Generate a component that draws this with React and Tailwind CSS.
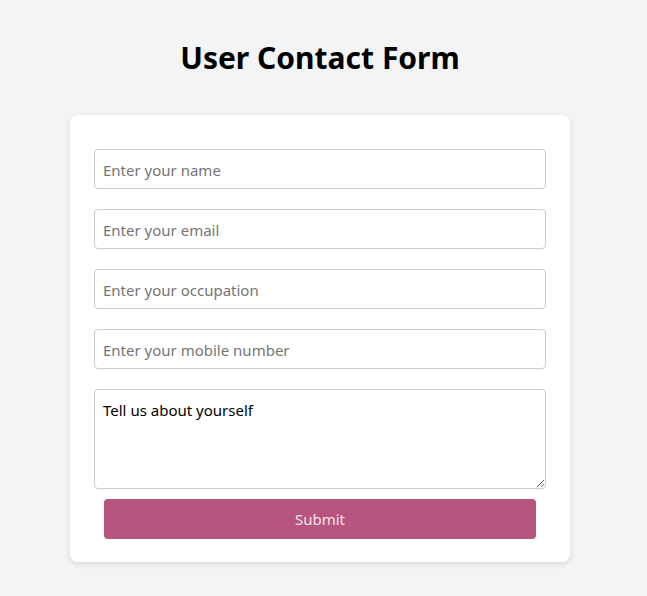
import { useState } from "react";

function App() {
  const [form, setForm] = useState({
    name: "",
    email: "",
    occupation: "",
    mobile: "",
    about: "Tell us about yourself",
  });

  const handleChange = (e) => {
    setForm({ ...form, [e.target.name]: e.target.value });
  };

  const handleSubmit = (event) => {
    event.preventDefault();
  };

  const inputClass =
    "w-full h-10 border border-[#cccccc] rounded-[4px] px-2 pt-[2px] text-[15px] text-black placeholder:text-[#757575] focus:outline-none";

  return (
    <div className="min-h-screen bg-[#f3f4f6] pr-[7px] pt-[40px] font-['Noto_Sans',sans-serif]">
      <h1 className="text-center text-3xl leading-9 font-bold text-black">
        User Contact Form
      </h1>

      <form
        onSubmit={handleSubmit}
        className="mx-auto mt-[39px] w-[500px] bg-white rounded-lg shadow-[0_2px_6px_rgb(0,0,0,0.12)] px-6 pt-[34px] pb-[23px] flex flex-col"
      >
        <input
          type="text"
          name="name"
          placeholder="Enter your name"
          value={form.name}
          onChange={handleChange}
          className={inputClass}
        />
        <input
          type="email"
          name="email"
          placeholder="Enter your email"
          value={form.email}
          onChange={handleChange}
          className={inputClass + " mt-5"}
        />
        <input
          type="text"
          name="occupation"
          placeholder="Enter your occupation"
          value={form.occupation}
          onChange={handleChange}
          className={inputClass + " mt-5"}
        />
        <input
          type="tel"
          name="mobile"
          placeholder="Enter your mobile number"
          value={form.mobile}
          onChange={handleChange}
          className={inputClass + " mt-5"}
        />
        <textarea
          name="about"
          value={form.about}
          onChange={handleChange}
          className="mt-5 w-full h-[100px] border border-[#cccccc] rounded-[4px] px-2 pt-[9px] text-[15px] text-black focus:outline-none"
        />
        <button
          type="submit"
          className="mt-[10px] mx-[10px] h-10 bg-[#b75580] text-[#f0e4ea] text-[15px] rounded-[4px]"
        >
          Submit
        </button>
      </form>
    </div>
  );
}

export default App;
